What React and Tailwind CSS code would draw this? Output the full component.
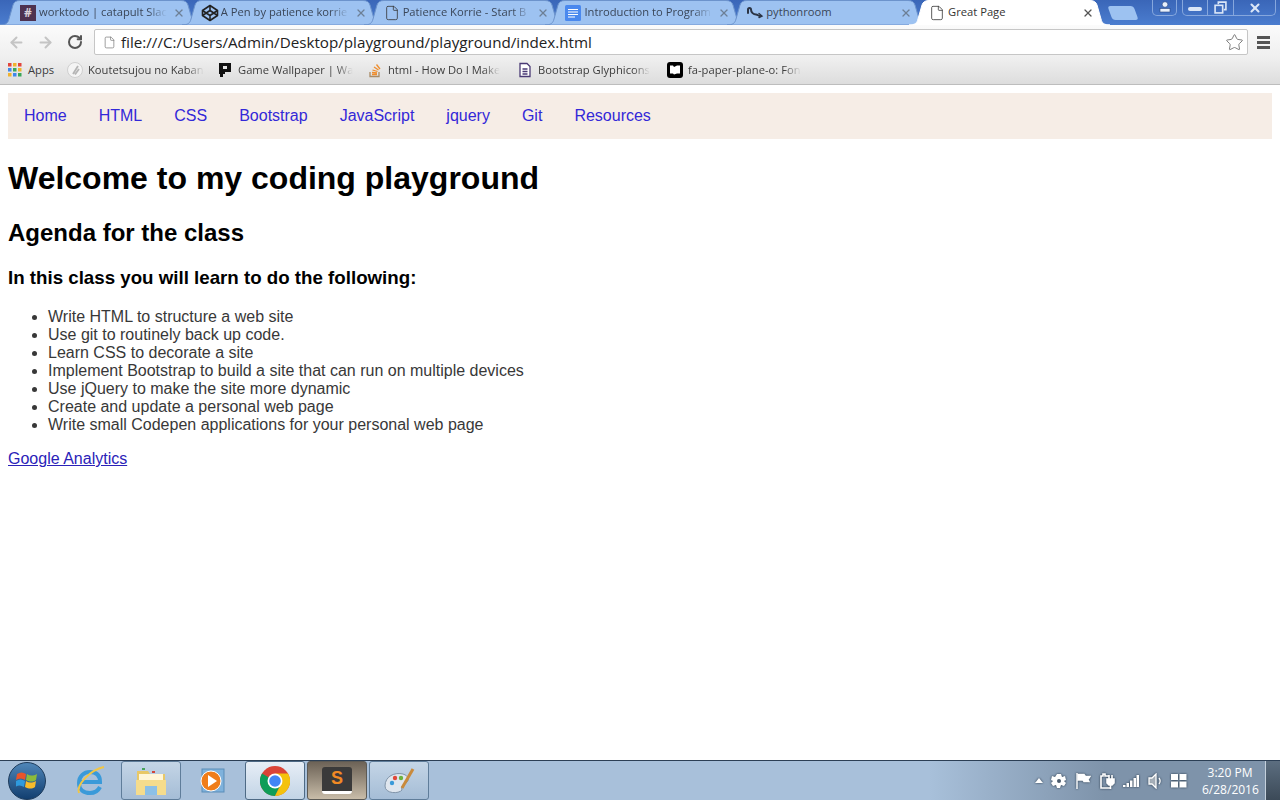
import React from 'react'
import { X, ArrowLeft, ArrowRight, RotateCw, Star, File } from 'lucide-react'

const tabs = [
  { title: 'worktodo | catapult Slac', icon: 'slack' },
  { title: 'A Pen by patience korrie', icon: 'pen' },
  { title: 'Patience Korrie - Start B', icon: 'page' },
  { title: 'Introduction to Program', icon: 'doc' },
  { title: 'pythonroom', icon: 'github', plain: true },
]

const navItems = ['Home', 'HTML', 'CSS', 'Bootstrap', 'JavaScript', 'jquery', 'Git', 'Resources']

const agenda = [
  'Write HTML to structure a web site',
  'Use git to routinely back up code.',
  'Learn CSS to decorate a site',
  'Implement Bootstrap to build a site that can run on multiple devices',
  'Use jQuery to make the site more dynamic',
  'Create and update a personal web page',
  'Write small Codepen applications for your personal web page',
]

const TabIcon = ({ type }) => {
  if (type === 'slack') {
    return <span className="w-4 h-4 bg-[#4d3250] text-[#d8d0d8] text-[12px] font-bold leading-4 text-center">#</span>
  }
  if (type === 'pen') {
    return (
      <svg width="18" height="18" viewBox="0 0 18 18" fill="none" stroke="#222" strokeWidth="1.6" strokeLinejoin="round">
        <path d="M9 1.5 16.5 6.5v5L9 16.5 1.5 11.5v-5z" />
        <path d="M9 1.5v5M9 11.5v5M1.5 6.5 9 11.5l7.500-5M1.500 11.500 9 6.500l7.500 5" />
      </svg>
    )
  }
  if (type === 'doc') {
    return (
      <svg width="16" height="16" viewBox="0 0 16 16">
        <rect width="16" height="16" rx="1.5" fill="#4a88ee" />
        <path d="M3 4.500h10M3 7h10M3 9.500h10M3 12h7" stroke="#fff" strokeWidth="1.2" />
      </svg>
    )
  }
  if (type === 'github') {
    return (
      <svg width="18" height="14" viewBox="0 0 18 14" fill="none" stroke="#2b3445" strokeWidth="2" strokeLinecap="round">
        <path d="M2 7V3.500c0-2 3-2 3 0 0 3 2.500 5 5 5 2 0 2.500 2 5 1.500" />
        <path d="M13 7.500l3 2.500-3 1.500" strokeWidth="1.400" />
      </svg>
    )
  }
  return <File size={16} strokeWidth={1.2} className="text-[#333]" />
}

// trapezoid shape behind one tab
const TabShape = ({ active }) => (
  <svg className="absolute inset-0 w-full h-full" viewBox="0 0 201 25" preserveAspectRatio="none">
    <path
      d="M0 25C6 25 8 23 9 19L13 5C14 2 16 0.500 20 0.500H181C185 0.500 187 2 188 5L192 19C193 23 195 25 201 25Z"
      fill={active ? '#ffffff' : '#9dc2f1'}
      stroke={active ? '#ffffff' : '#6c93cc'}
      strokeWidth="1"
    />
  </svg>
)

const Tab = ({ title, icon, active, plain }) => (
  <div className="relative w-[201px] h-[25px] -mr-[19.200px] shrink-0 font-['Open_Sans',sans-serif]">
    <TabShape active={active} />
    <div className="relative flex items-center h-full pl-[19px] pr-[16px]">
      <span className="w-[18px] h-[18px] flex items-center justify-center shrink-0">
        <TabIcon type={icon} />
      </span>
      <span
        className={`flex-1 min-w-0 ml-[2px] whitespace-nowrap text-[11.200px] ${
          active ? 'text-[#333]' : 'text-[#3a4658]'
        } ${active || plain ? '' : '[mask-image:linear-gradient(to_right,black_85%,transparent)]'}`}
      >
        {title}
      </span>
      <X size={12} strokeWidth={2.6} className={active ? 'ml-[6px] text-[#555] shrink-0' : 'ml-[6px] text-[#6d7f96] shrink-0'} />
    </div>
  </div>
)

const Bookmark = ({ icon, label, width, plain }) => (
  <div className="flex items-center gap-[5px] whitespace-nowrap" style={{ width }}>
    <span className="w-4 h-4 flex items-center justify-center shrink-0">{icon}</span>
    <span className={`text-[11.200px] text-[#3c3c3c] ${plain ? '' : '[mask-image:linear-gradient(to_right,black_85%,transparent)]'}`}>{label}</span>
  </div>
)

const AppsIcon = () => (
  <svg width="14" height="14" viewBox="0 0 14 14">
    {[['#e2453c', '#f1b32e', '#e2453c'], ['#3f87ea', '#3aa757', '#f1b32e'], ['#f1b32e', '#3f87ea', '#3aa757']].map((row, y) =>
      row.map((c, x) => <rect key={`${x}-${y}`} x={x * 5} y={y * 5} width="3.500" height="3.500" fill={c} />)
    )}
  </svg>
)

const TaskButton = ({ children, active, dark }) => (
  <div
    className={`w-[60px] h-[39px] rounded-[3px] border flex items-center justify-center ${
      dark
        ? 'bg-gradient-to-b from-[#6d6357] to-[#c9bda9] border-[#5c5a55]'
        : active
          ? 'bg-gradient-to-b from-[#e7eef6] to-[#c2d4e6] border-[#4e6a85]'
          : 'bg-gradient-to-b from-[#c4d5e6] to-[#a5bdd6] border-[#5f7d9a]'
    }`}
  >
    {children}
  </div>
)

const ChromeLogo = () => (
  <svg width="30" height="30" viewBox="0 0 30 30">
    <circle cx="15" cy="15" r="15" fill="#db4437" />
    <path d="M15 15 2 7.500A15 15 0 0 0 15 30l7.500-15z" fill="#0f9d58" />
    <path d="M15 7.500h13A15 15 0 0 1 15 30l7.500-15z" fill="#f4c20d" />
    <circle cx="15" cy="15" r="7.500" fill="#fff" />
    <circle cx="15" cy="15" r="5.800" fill="#4285f4" />
  </svg>
)

const App = () => {
  return (
    <div className="w-[1280px] h-[800px] flex flex-col overflow-hidden bg-white font-['Liberation_Sans',sans-serif]">
      {/* browser chrome */}
      <header className="shrink-0 font-['Open_Sans',sans-serif]">
        <div className="h-[25px] flex bg-gradient-to-b from-[#3a66b8] to-[#4b7dcf]">
          {tabs.map((t) => (
            <Tab key={t.title} title={t.title} icon={t.icon} plain={t.plain} />
          ))}
          <Tab title="Great Page" icon="page" active />
          <div className="w-[26px] h-[14px] mt-[6px] ml-[19px] rounded-[3px] bg-[#9dc2f1] skew-x-[20deg]" />
          <div className="flex-1 flex justify-end pr-[4px] gap-[5px] items-start">
            <div className="w-[25px] h-[16px] rounded-b-[5px] border border-t-0 border-[#86a7dd] flex justify-center pt-[1px]">
              <svg width="12" height="12" viewBox="0 0 12 12" fill="#e8f0fb" stroke="#27457f" strokeWidth="0.600"><circle cx="6" cy="3.500" r="2.800" /><rect x="1" y="7.500" width="10" height="3.500" /></svg>
            </div>
            <div className="h-[16px] flex rounded-b-[5px] border border-t-0 border-[#86a7dd] text-[#dbe6f7]">
              <div className="w-[25px] flex items-center justify-center border-r border-[#86a7dd]"><span className="w-[14px] h-[4px] mt-[3px] rounded-[2px] bg-[#dbe6f7]" /></div>
              <div className="w-[26px] flex items-center justify-center border-r border-[#86a7dd]">
                <svg width="13" height="13" viewBox="0 0 12 12" fill="none" stroke="#dbe6f7" strokeWidth="1.500"><rect x="1" y="4" width="7" height="7" /><path d="M4 3V1h7v7H9" /></svg>
              </div>
              <div className="w-[41px] flex items-center justify-center"><X size={14} strokeWidth={3.600} /></div>
            </div>
          </div>
        </div>

        <div className="h-[33px] flex items-center bg-gradient-to-b from-[#fbfbfb] to-[#efefef] pl-[8px] pr-[10px] pt-[1px]">
          <ArrowLeft size={17} strokeWidth={2.800} className="text-[#c4c4c4]" />
          <ArrowRight size={17} strokeWidth={2.800} className="text-[#c4c4c4] ml-[12px]" />
          <RotateCw size={16} strokeWidth={3} className="text-[#555] ml-[13px]" />
          <div className="ml-[11px] flex-1 h-[26px] bg-white border border-[#c6c6c6] rounded-[2px] flex items-center pl-[8px] pr-[2px]">
            <File size={13} strokeWidth={1.300} className="text-[#777]" />
            <span className="ml-[5px] flex-1 text-[15.200px] text-[#222] whitespace-nowrap">file:///C:/Users/Admin/Desktop/playground/playground/index.html</span>
            <Star size={19} strokeWidth={1.200} className="text-[#777] mr-[1px]" />
          </div>
          <div className="ml-[9px] w-[13px] flex flex-col gap-[2px]">
            <span className="h-[3px] bg-[#555]" />
            <span className="h-[3px] bg-[#555]" />
            <span className="h-[3px] bg-[#555]" />
          </div>
        </div>

        <div className="h-[27px] flex items-center bg-gradient-to-b from-[#efefef] to-[#dddddd] border-b border-[#bdbdbd] pl-[7px] pb-[2px]">
          <Bookmark width="60px" label="Apps" plain icon={<AppsIcon />} />
          <Bookmark width="150px" label="Koutetsujou no Kaban" icon={
            <svg width="16" height="16" viewBox="0 0 16 16"><circle cx="8" cy="8" r="7.500" fill="#f4f4f4" stroke="#cfcfcf" /><path d="M6 12 11 4M8 12.500 12 7" stroke="#b5b5b5" strokeWidth="1.800" /></svg>
          } />
          <Bookmark width="150px" label="Game Wallpaper | Wa" icon={
            <svg width="14" height="16" viewBox="0 0 14 16"><path d="M1 1h12v9H7v2H5v3H2v-3H1z" fill="#111" /><rect x="5" y="4" width="4" height="3" fill="#e6e6e6" /></svg>
          } />
          <Bookmark width="150px" label="html - How Do I Make" icon={
            <svg width="14" height="16" viewBox="0 0 14 16" fill="none"><path d="M2 10v4.500h9V10" stroke="#a88a66" strokeWidth="1.300" /><path d="M4 12.500h5M4 10.500l5 .5M4.500 8l5 1.500M6 5l4.500 3M8.500 2.500l3.500 4.500" stroke="#ef8d2c" strokeWidth="1.300" /></svg>
          } />
          <Bookmark width="150px" label="Bootstrap Glyphicons" icon={
            <svg width="14" height="16" viewBox="0 0 14 16" fill="#fff" stroke="#4a3a75" strokeWidth="1.300"><path d="M2 1.500h7l3 3v10H2z" /><path d="M4.500 7h5M4.500 9.500h5M4.500 12h5" fill="none" /></svg>
          } />
          <Bookmark width="140px" label="fa-paper-plane-o: Fon" icon={
            <svg width="16" height="16" viewBox="0 0 16 16"><rect width="16" height="16" rx="3" fill="#000" /><path d="M3 3.500h3l1 1.500 3-1.500h3v8h-3l-3 1-1-1H3z" fill="#fff" /></svg>
          } />
        </div>
      </header>

      {/* page */}
      <main className="flex-1 px-[8px] pt-[8px] text-[16px] text-[#383838]">
        <nav className="h-[46px] bg-[#f6ede6] flex items-center pl-[16px] gap-[32px] text-[#3328d8]">
          {navItems.map((n) => (
            <a key={n} href="#" className="leading-[18px]">{n}</a>
          ))}
        </nav>
        <h1 className="text-[32px] font-bold text-black leading-[37px] mt-[21px]">Welcome to my coding playground</h1>
        <h2 className="text-[24px] font-bold text-black leading-[28px] mt-[22px]">Agenda for the class</h2>
        <h3 className="text-[18.720px] font-bold text-black leading-[22px] mt-[20px]">In this class you will learn to do the following:</h3>
        <ul className="list-disc pl-[40px] mt-[19px] leading-[18px]">
          {agenda.map((a) => (
            <li key={a}>{a}</li>
          ))}
        </ul>
        <p className="mt-[16px] leading-[18px]">
          <a href="#" className="underline text-[#2a22b8]">Google Analytics</a>
        </p>
      </main>

      {/* windows taskbar */}
      <footer className="shrink-0 h-[40px] border-t border-[#2c3f55] bg-[#a8c0da] flex items-center pl-[8px]">
        <div className="w-[38px] h-[38px] rounded-full bg-gradient-to-b from-[#4f86b8] to-[#123f70] border border-[#1c3a5a] flex items-center justify-center">
          <svg width="22" height="20" viewBox="0 0 22 20">
            <path d="M1 3c3-2 6-2 9 0l-1 6c-3-2-6-2-9 0z" fill="#e9552a" />
            <path d="M11 3c3 2 6 2 10 0l-1 6c-3 2-6 2-10 0z" fill="#8dbb3a" />
            <path d="M0 10c3-2 6-2 9 0l-1 6c-3-2-6-2-9 0z" fill="#2e9ade" />
            <path d="M10 10c3 2 6 2 10 0l-1 6c-3 2-6 2-10 0z" fill="#f7bb2b" />
          </svg>
        </div>
        <div className="w-[75px] flex justify-center pl-[13px]">
          <svg width="32" height="32" viewBox="0 0 32 32" fill="none">
            <path d="M7 17h19C26 10 22 7 16 7 10 7 5 11 5 18c0 7 5 10 11 10 5 0 8-2 10-6" stroke="#3a9ad9" strokeWidth="4" />
            <path d="M5 28C2 20 16 5 30 2" stroke="#f1c644" strokeWidth="2" />
          </svg>
        </div>
        <TaskButton>
          <svg width="32" height="30" viewBox="0 0 32 30">
            <path d="M2 5h11l2 3h15v20H2z" fill="#e8c867" />
            <path d="M4 8h24v8H4z" fill="#fff6d8" />
            <path d="M1 14h30v15H1z" fill="#f5dc8c" />
            <path d="M10 20h12v9H10z" fill="#8cc0e6" />
            <rect x="7" y="2" width="3" height="2" fill="#48a25a" />
            <rect x="17" y="5" width="3" height="2" fill="#d0463a" />
          </svg>
        </TaskButton>
        <div className="w-[64px] flex justify-center">
          <svg width="30" height="28" viewBox="0 0 30 28">
            <rect x="4" y="2" width="22" height="23" fill="#7fb2dc" stroke="#5b8db8" />
            <circle cx="13" cy="14" r="10" fill="#ef7d1a" stroke="#fff" strokeWidth="1" />
            <path d="M10 8l9 6-9 6z" fill="#fff" />
          </svg>
        </div>
        <TaskButton active><ChromeLogo /></TaskButton>
        <span className="w-[2px]" />
        <TaskButton dark>
          <div className="w-[30px] h-[27px] rounded-[3px] bg-[#3a3a3a] border-b-[3px] border-white text-[#f08a24] text-[18px] font-bold leading-[22px] text-center">S</div>
        </TaskButton>
        <span className="w-[2px]" />
        <TaskButton>
          <svg width="34" height="30" viewBox="0 0 34 30">
            <path d="M3 20C3 10 13 6 21 8c6 2 7 6 3 9-4 2-5 4-4 7-3 4-17 4-17-4z" fill="#dfe6ee" stroke="#7f93a8" />
            <circle cx="10" cy="17" r="2.200" fill="#3a9ad9" />
            <circle cx="13" cy="12" r="2.200" fill="#e0483a" />
            <circle cx="19" cy="12" r="2.200" fill="#6cb33f" />
            <path d="M20 22 31 3" stroke="#c98a3c" strokeWidth="3" />
          </svg>
        </TaskButton>
        <div className="flex-1 h-full flex items-center justify-end bg-gradient-to-r from-transparent via-[#7e93aa] to-[#7e93aa] ml-[500px] text-white">
          <div className="flex items-center gap-[8px] mr-[15px] [filter:drop-shadow(0_0_1px_#223344)]">
            <svg width="8" height="5" viewBox="0 0 8 5" fill="#fff"><path d="M4 0l4 5H0z" /></svg>
            <svg width="16" height="16" viewBox="0 0 16 16" fill="#fff"><path d="M6 1h4l1 3 3-1 1 4-2 1 2 2-2 3-3-1-1 3H6l-1-3-3 1-2-3 2-2-2-1 1-4 3 1z" /><circle cx="8" cy="8" r="2" fill="#4a5a6c" /></svg>
            <svg width="16" height="18" viewBox="0 0 16 18" fill="none" stroke="#fff" strokeWidth="1.400"><path d="M2 1v16" /><path d="M3 2.500h6l1.500 2H15l-2 3 1 2H9L8 8H3z" fill="#fff" /></svg>
            <svg width="16" height="18" viewBox="0 0 16 18" fill="none" stroke="#fff" strokeWidth="1.600"><path d="M11 16H2V4h2V2h2v2h4" /><path d="M8 7h7v4l-2 2H10L8 11zM10 7V3M13 7V3M11.500 13v4" fill="#fff" /></svg>
            <svg width="16" height="14" viewBox="0 0 16 14" fill="#fff"><rect x="0" y="11" width="2.500" height="2" /><rect x="3.500" y="9" width="2.500" height="4" /><rect x="7" y="6.500" width="2.500" height="6.500" /><rect x="10.500" y="4" width="2.500" height="9" /><rect x="13.500" y="1" width="2.500" height="12" /></svg>
            <svg width="16" height="16" viewBox="0 0 16 16" fill="none" stroke="#fff" strokeWidth="1.300"><path d="M2 5h3l4-4v14l-4-4H2z" fill="#fff" fillOpacity="0.500" /><path d="M12 5c1.500 2 1.500 4 0 6" /></svg>
            <svg width="16" height="16" viewBox="0 0 16 16" fill="#fff"><rect x="0" y="1" width="7" height="6" /><rect x="8.500" y="1" width="7" height="6" /><rect x="0" y="8.500" width="7" height="6" /><rect x="8.500" y="8.500" width="7" height="6" /></svg>
          </div>
          <div className="w-[56px] text-center text-[12px] leading-[17px] font-['Open_Sans',sans-serif] text-white whitespace-nowrap">
            <div>3:20 PM</div>
            <div>6/28/2016</div>
          </div>
          <div className="w-[15px] h-full ml-[7px] bg-gradient-to-b from-[#5c6e80] to-[#3c4a58] border-l border-[#c4d0dc]" />
        </div>
      </footer>
    </div>
  )
}

export default App
